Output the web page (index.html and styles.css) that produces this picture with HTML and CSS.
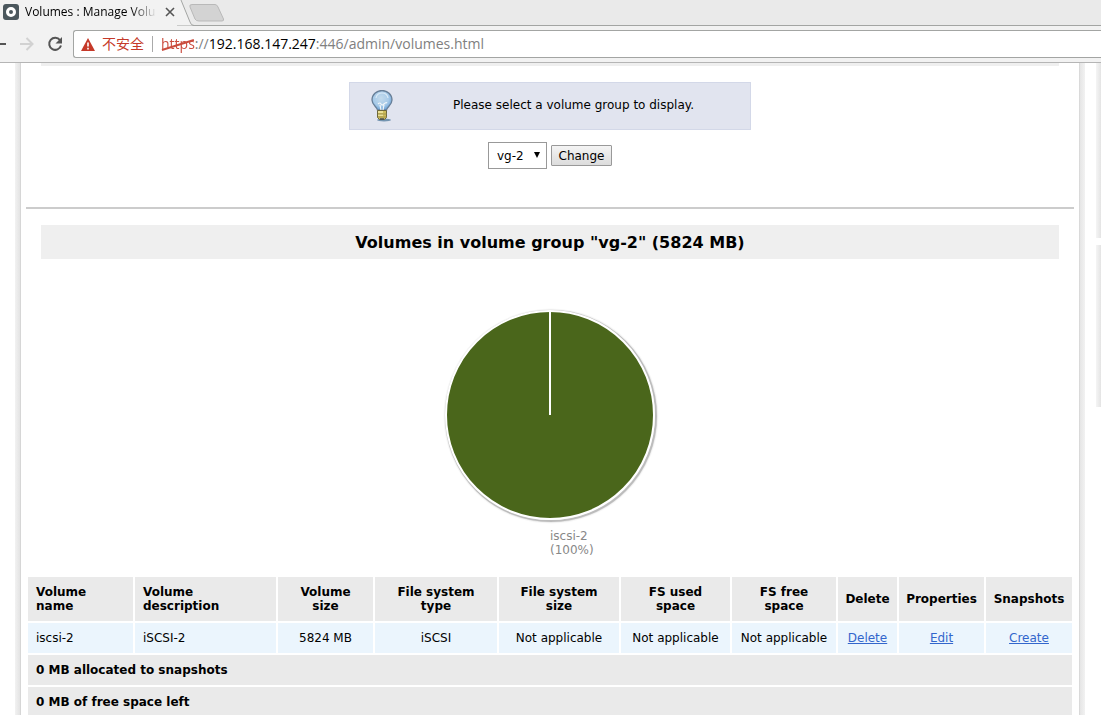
FILE: index.html
```html
<!DOCTYPE html>
<html lang="en">
<head>
<meta charset="utf-8">
<title>Volumes : Manage Volumes</title>
<link rel="stylesheet" href="styles.css">
</head>
<body>
<header class="browser">
  <div class="tabs">
    <div class="tab">
      <svg class="favicon" width="16" height="16" viewBox="0 0 16 16"><rect width="16" height="16" rx="3" fill="#4b575d"/><circle cx="8" cy="8" r="3.5" fill="none" stroke="#fff" stroke-width="3"/></svg>
      <span class="tab-title">Volumes : Manage Volu</span>
      <button class="icon-button" aria-label="Close tab"><svg width="10" height="10" viewBox="0 0 10 10"><path d="M1 1l8 8M9 1l-8 8" stroke="#555" stroke-width="1.6"/></svg></button>
    </div>
    <svg class="tab-edge" width="52" height="26" viewBox="0 0 52 26"><path d="M0 0H4L13 22Q14 25.500 17 25.500H0Z" fill="#f2f2f2"/><path d="M4 0L13 22Q14 25.500 17 25.500H52" fill="none" stroke="#a3a5a3"/><path d="M15 4.500H38Q40 4.500 41 7L46.500 19Q47 21 45 21H22Q19 21 18 19L13 7Q12 4.500 15 4.500Z" fill="#d3d3d3" stroke="#b9b9b9"/></svg>
  </div>
  <div class="toolbar">
    <button class="icon-button back" aria-label="Back"><svg width="6" height="16" viewBox="0 0 6 16"><path d="M0 8h6" stroke="#555" stroke-width="2"/></svg></button>
    <button class="icon-button forward" aria-label="Forward"><svg width="14" height="14" viewBox="0 0 14 14"><path d="M0 7h12M6.500 1l6 6-6 6" fill="none" stroke="#d2d2d2" stroke-width="2"/></svg></button>
    <button class="icon-button reload" aria-label="Reload"><svg width="16" height="16" viewBox="0 0 16 16"><path d="M13 4.200A6 6 0 1 0 14 9.500" fill="none" stroke="#555" stroke-width="2"/><path d="M15 1v6.500H8.500Z" fill="#555"/></svg></button>
    <div class="address">
      <svg width="14" height="13" viewBox="0 0 14 13"><path d="M7 0l7 13H0Z" fill="#c53929"/><path d="M7 4.500v4M7 9.700v1.800" stroke="#fff" stroke-width="1.6"/></svg>
      <span class="warning">不安全</span>
      <span class="divider"></span>
      <div class="url" role="textbox" aria-label="Address" contenteditable="true" spellcheck="false"><span class="scheme">https<svg class="strike" viewBox="0 0 36 14" preserveAspectRatio="none"><path d="M1 12L35 2" stroke="#c53929" stroke-width="2"/></svg></span>://<span class="host">192.168.147.247</span>:446/admin/volumes.html</div>
    </div>
  </div>
</header>
<div class="page">
  <div class="shade shade-left"></div>
  <main class="panel">
    <div class="bar-end"></div>
    <section class="chooser">
      <div class="notice">
        <svg width="22" height="32" viewBox="0 0 22 32">
          <defs><radialGradient id="glass" cx=".45" cy=".4" r=".6"><stop offset="0" stop-color="#c3daec"/><stop offset=".65" stop-color="#a7cae8"/><stop offset="1" stop-color="#6fa4d8"/></radialGradient></defs>
          <ellipse cx="13" cy="30" rx="7" ry="1.500" fill="#7394b0"/>
          <path d="M6.500 20C6 17 1 15 1 10A10 9.500 0 0 1 21 10C21 15 16 17 15.500 20Z" fill="url(#glass)" stroke="#687f98" stroke-width="1.300"/>
          <path d="M5 8Q6 3 11 3T17 8" fill="none" stroke="#dbeaf6" stroke-width="1.200"/>
          <path d="M7 14q2-2 3 0t3 0t3-1M9 15l1 5M13 15l-1 5" fill="none" stroke="#f1f6fa" stroke-width="1.200"/>
          <path d="M6.500 20.500h9v7l-2 2h-5l-2-2Z" fill="#cdbb58" stroke="#6e683c"/>
          <path d="M7 22h5M7 25h5" stroke="#f5edaa" stroke-width="1.300"/>
          <path d="M7 24h8.500M7 27h8.500" stroke="#a09450"/><path d="M9 29h4" stroke="#4a5258" stroke-width="1.500"/>
        </svg>
        <p>Please select a volume group to display.</p>
      </div>
      <form class="picker">
        <div class="select-box"><select aria-label="Volume group"><option>vg-2</option></select><span class="arrow"></span></div>
        <button class="change" type="button">Change</button>
      </form>
    </section>
    <hr>
    <h1>Volumes in volume group "vg-2" (5824 MB)</h1>
    <figure class="chart">
      <svg width="220" height="220" viewBox="0 0 220 220">
        <circle cx="111" cy="111" r="105" fill="none" stroke="#000" stroke-opacity=".03" stroke-width="5"/>
        <circle cx="111" cy="111" r="105" fill="none" stroke="#000" stroke-opacity=".08" stroke-width="3"/>
        <circle cx="111" cy="111" r="105" fill="none" stroke="#000" stroke-opacity=".17" stroke-width="2"/>
        <circle cx="110" cy="110" r="104" fill="#4a661b" stroke="#fff" stroke-width="2"/>
        <path d="M110 110V6" stroke="#fff" stroke-width="2"/>
      </svg>
      <figcaption>iscsi-2<br>(100%)</figcaption>
    </figure>
    <table>
      <colgroup><col class="c-name"><col class="c-desc"><col class="c-size"><col class="c-type"><col class="c-fs"><col class="c-used"><col class="c-free"><col class="c-del"><col class="c-prop"><col class="c-snap"></colgroup>
      <thead>
        <tr><th class="start">Volume<br>name</th><th class="start">Volume<br>description</th><th>Volume<br>size</th><th>File system<br>type</th><th>File system<br>size</th><th>FS used<br>space</th><th>FS free<br>space</th><th>Delete</th><th>Properties</th><th>Snapshots</th></tr>
      </thead>
      <tbody>
        <tr><td class="start">iscsi-2</td><td class="start">iSCSI-2</td><td>5824 MB</td><td>iSCSI</td><td>Not applicable</td><td>Not applicable</td><td>Not applicable</td><td><a href="#delete">Delete</a></td><td><a href="#edit">Edit</a></td><td><a href="#create">Create</a></td></tr>
        <tr><th class="start" colspan="10">0 MB allocated to snapshots</th></tr>
        <tr><th class="start" colspan="10">0 MB of free space left</th></tr>
      </tbody>
    </table>
  </main>
  <div class="shade shade-right"></div>
  <aside class="sidebar"><div class="side-card side-first"></div><div class="side-card side-second"></div></aside>
</div>
</body>
</html>
```
FILE: styles.css
```css
* { box-sizing: border-box; }
body {
  display: flex;
  flex-direction: column;
  height: 100vh;
  margin: 0;
  overflow: hidden;
  background: #fff;
  color: #000;
  font: 12px/14px "DejaVu Sans", Verdana, sans-serif;
}
.browser {
  flex: none;
  background: #f2f2f2;
  border-bottom: 1px solid #b5b5b5;
  font-family: "Open Sans", "Noto Sans CJK SC", sans-serif;
}
.tabs { display: flex; height: 26px; background: linear-gradient(#a3a5a3, #a3a5a3) bottom / 100% 1px no-repeat #eaeaea; }
.tab { display: flex; align-items: center; width: 177px; padding: 0 2px 2px 3px; background: #f2f2f2; }
.favicon { flex: none; margin-right: 6px; }
.tab-title {
  flex: 1;
  white-space: nowrap;
  font-size: 12px;
  line-height: 20px;
  -webkit-mask-image: linear-gradient(90deg, #000 80%, transparent);
  mask-image: linear-gradient(90deg, #000 80%, transparent);
}
.icon-button { display: flex; padding: 0; border: 0; background: none; }
.tab .icon-button { margin: 0 0 0 8px; }
.toolbar { display: flex; align-items: center; height: 36px; padding: 4px 0; }
.back { margin-right: 14px; }
.forward { margin-right: 13px; }
.reload { margin-right: 10px; }
.address {
  display: flex;
  flex: 1;
  align-items: center;
  height: 28px;
  padding-left: 7px;
  border: 1px solid #a3a5a3;
  border-right: 0;
  border-radius: 3px 0 0 3px;
  background: #fff;
  font-size: 14px;
  line-height: 22px;
}
.warning { margin-left: 7px; color: #c53929; }
.divider { width: 1px; height: 16px; margin: 0 8px; background: #aaa; }
.url { color: #808080; outline: 0; white-space: nowrap; }
.host { color: #000; }
.scheme { position: relative; color: #c53929; opacity: .9; }
.strike { position: absolute; left: 0; top: 4px; width: 100%; height: 14px; }

.page { display: flex; flex: 1; min-height: 0; overflow: hidden; }
.shade { flex: none; width: 6px; }
.shade-left { margin-left: 15px; background: linear-gradient(90deg, #f2f2f2, #e4e4e4 80%, #ccc); }
.shade-right { background: linear-gradient(90deg, #d0d0d0, #e6e6e6 20%, #f2f2f2); }
.panel { flex: 1; height: max-content; min-width: 0; padding: 0 5px; }
.bar-end { height: 3px; margin: 0 15px; background: #efefef; }
.chooser { display: flex; flex-direction: column; align-items: center; padding: 16px 0 38px; }
.notice {
  display: flex;
  align-items: center;
  width: 402px;
  height: 48px;
  padding-left: 21px;
  border: 1px solid #d3d8e8;
  background: #e1e4ef;
}
.notice p { flex: 1; margin: 0 0 2px; padding-left: 4px; text-align: center; }
.picker { display: flex; align-items: center; gap: 4px; margin-top: 12px; }
.select-box { position: relative; }
select {
  width: 59px;
  height: 27px;
  padding: 0 8px;
  border: 1px solid #999;
  border-radius: 0;
  background: #fff;
  color: #000;
  font: inherit;
  appearance: none;
}
.arrow {
  position: absolute;
  right: 7px;
  top: 10px;
  border: solid transparent;
  border-width: 6px 3px 0;
  border-top-color: #000;
  pointer-events: none;
}
.change {
  width: 61px;
  height: 21px;
  padding: 0;
  border: 1px solid #999;
  border-radius: 1px;
  background: linear-gradient(#f4f4f4, #dcdcdc);
  color: #000;
  font: inherit;
}
hr { height: 2px; margin: 0; border: 0; background: #ccc; }
h1 { margin: 16px 15px 0; padding-top: 2px; background: #efefef; font-size: 16px; line-height: 32px; text-align: center; }
.chart { margin: 46px 0 18px; text-align: center; }
.chart svg { display: block; margin: 0 auto; }
figcaption { margin: 4px 0 0 50%; color: #888; text-align: left; }
table { width: 100%; border-spacing: 2px; table-layout: fixed; }
th, td { padding: 8px; text-align: center; }
th { background: #eaeaea; }
thead th { padding: 8px 0 8px; }
td { background: #ebf5fd; }
.start, thead .start { padding-left: 8px; text-align: left; }
td:not(.start) { padding: 8px 0; }
th:not([class]) { white-space: nowrap; }
.c-name { width: 105px; }
.c-desc { width: 141px; }
.c-size { width: 95px; }
.c-type { width: 122px; }
.c-fs { width: 120px; }
.c-used { width: 109px; }
.c-free { width: 104px; }
.c-del { width: 59px; }
.c-prop { width: 85px; }
.c-snap { width: 86px; }
a { color: #3366cc; }
.sidebar { flex: none; width: 5px; margin-left: 11px; }
.side-card { background: linear-gradient(90deg, #f5f5f5, #e4e4e4); }
.side-first { height: 175px; margin-bottom: 7px; }
.side-second { height: 162px; }
```
